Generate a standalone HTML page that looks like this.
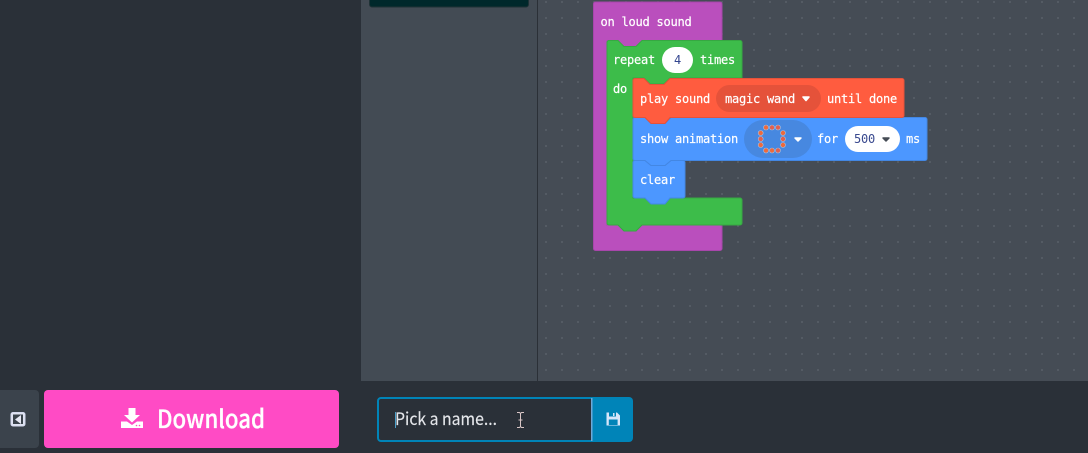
<!DOCTYPE html>
<html><head><meta charset="utf-8"><style>
html,body{margin:0;padding:0;background:#2a3038;width:1088px;height:453px;overflow:hidden}
svg{display:block}
.m{font-family:"DejaVu Sans Mono","Liberation Mono",monospace;font-size:12px;letter-spacing:-.22px;fill:#fff;stroke:#fff;stroke-width:.2}
</style></head><body>
<svg width="1088" height="453" viewBox="0 0 1088 453" xmlns="http://www.w3.org/2000/svg">
<defs><pattern id="g" x="538" y="-6" width="16" height="16" patternUnits="userSpaceOnUse"><path d="M7 8h2M8 7v2" stroke="#636b74" stroke-width=".6"/></pattern></defs>
<rect width="1088" height="453" fill="#2a3038"/>
<rect x="361" y="0" width="176" height="381" fill="#434b54"/>
<rect x="537" y="0" width="1" height="381" fill="#2b3037"/>
<rect x="538" y="0" width="550" height="381" fill="#454c55"/>
<rect x="538" y="0" width="550" height="381" fill="url(#g)"/>
<rect x="369.500" y="-5" width="159" height="12" rx="2.500" fill="#00282b" stroke="#1f3236"/>

<!-- purple C -->
<path d="M595.500 2H720a2 2 0 0 1 2 2V41H607V225H720a2 2 0 0 1 2 2V248.500a2 2 0 0 1-2 2H595.500a2 2 0 0 1-2-2V4a2 2 0 0 1 2-2Z" fill="#ba4fbd" stroke="#a846ab"/>
<path d="M617 39H643L636 47H624Z" fill="#ba4fbd"/>
<text class="m" x="600.500" y="26">on loud sound</text>
<!-- green C -->
<path d="M609 40.500H618l6 6h12l6-6H740a2 2 0 0 1 2 2V78H670l-6 6H650l-6-6H633V198H740a2 2 0 0 1 2 2V223a2 2 0 0 1-2 2H642l-6 6H624l-6-6H609a2 2 0 0 1-2-2V42.500a2 2 0 0 1 2-2Z" fill="#3dbc4a" stroke="#36a842"/>
<rect x="662" y="47" width="31" height="26" rx="13" fill="#fff"/>
<text class="m" x="613" y="64">repeat</text>
<text class="m" x="674" y="64" style="fill:#33458f;stroke:none">4</text>
<text class="m" x="700" y="64">times</text>
<text class="m" x="613" y="93">do</text>
<!-- blue clear -->
<path d="M635 160.500H645l6 5h14l6-5H683a2 2 0 0 1 2 2V196a2 2 0 0 1-2 2H670l-5 6H651l-6-6H635a2 2 0 0 1-2-2V162.500a2 2 0 0 1 2-2Z" fill="#4c97ff" stroke="#4387e3"/>
<text class="m" x="640" y="184">clear</text>
<!-- blue show -->
<path d="M635 117.500H645l6 6h14l6-6H925a2 2 0 0 1 2 2V158.500a2 2 0 0 1-2 2H671l-6 5H651l-6-5H635a2 2 0 0 1-2-2V119.500a2 2 0 0 1 2-2Z" fill="#4c97ff" stroke="#4387e3"/>
<!-- orange -->
<path d="M635 78.500H644l6 6h14l6-6H902a2 2 0 0 1 2 2V115.500a2 2 0 0 1-2 2H670l-5 6H651l-6-6H635a2 2 0 0 1-2-2V80.500a2 2 0 0 1 2-2Z" fill="#ff5c3f" stroke="#e5523a"/>
<rect x="716" y="85" width="105" height="27" rx="13.500" fill="#e5523a"/>
<text class="m" x="640" y="103">play sound</text>
<text class="m" x="725" y="103">magic wand</text>
<path d="M803 97h6l-3 3.500Z" fill="#fff" stroke="#fff" stroke-width="1.600" stroke-linejoin="round"/>
<text class="m" x="827" y="103">until done</text>
<text class="m" x="640" y="143">show animation</text>
<rect x="744" y="120" width="68" height="38" rx="19" fill="#4788e0"/>
<g fill="#ee6a3c" stroke="#a9bfe0" stroke-width=".6">
<circle cx="766" cy="127.500" r="2.500"/><circle cx="772" cy="127.500" r="2.500" fill="#e0604f"/><circle cx="778" cy="127.500" r="2.500" fill="#e0604f"/>
<circle cx="760.700" cy="133" r="2.500"/><circle cx="760.700" cy="139" r="2.500" fill="#e0604f"/><circle cx="760.700" cy="145" r="2.500"/>
<circle cx="783" cy="133" r="2.500"/><circle cx="783" cy="139" r="2.500" fill="#e0604f"/><circle cx="783" cy="145" r="2.500"/>
<circle cx="766" cy="150.500" r="2.500"/><circle cx="772" cy="150.500" r="2.500"/><circle cx="778" cy="150.500" r="2.500" fill="#e0604f"/>
</g>
<path d="M795 138h6l-3 3Z" fill="#fff" stroke="#fff" stroke-width="1.500" stroke-linejoin="round"/>
<text class="m" x="817" y="143">for</text>
<rect x="845" y="126" width="55" height="26" rx="13" fill="#fff"/>
<text class="m" x="854" y="143" style="fill:#3a4a8f;stroke:none">500</text>
<path d="M883 138h6l-3 3Z" fill="#454c55" stroke="#454c55" stroke-width="1.500" stroke-linejoin="round"/>
<text class="m" x="906" y="143">ms</text>

<!-- bottom left -->
<path d="M0 390H35a4 4 0 0 1 4 4V444a4 4 0 0 1-4 4H0Z" fill="#3b434c"/>
<rect x="11" y="412.500" width="14" height="13.500" rx="2" fill="#dfe3f2" stroke="#d5d9ee"/>
<rect x="13" y="414.500" width="10" height="9.500" fill="#3b434c"/>
<path d="M21 415v9l-6-4.500Z" fill="#e6e8f4"/>
<rect x="44" y="390" width="295" height="58" rx="4" fill="#ff4bc5"/>
<path d="M128.500 408h7v7h4.500l-8 7.500-8-7.500h4.500Z" fill="#fff"/>
<path d="M121 421.500h6l5 3.500 5-3.500H143v6.500H121Z" fill="#fff"/>
<circle cx="136.500" cy="425.500" r=".8" fill="#ff4bc5"/><circle cx="139.500" cy="425.500" r=".8" fill="#ff4bc5"/>
<text x="157" y="428" font-family="'Noto Sans CJK JP','Liberation Sans',sans-serif" font-weight="500" font-size="25" fill="#fff" stroke="#fff" stroke-width=".3" textLength="108" lengthAdjust="spacingAndGlyphs">Download</text>

<!-- name input -->
<path d="M592 398H381a3 3 0 0 0-3 3V438a3 3 0 0 0 3 3H592" fill="#2a3038" stroke="#0084b8" stroke-width="2"/>
<path d="M592 397H629a4 4 0 0 1 4 4V438a4 4 0 0 1-4 4H592Z" fill="#0084b8"/>
<rect x="591" y="398" width="1.500" height="43" fill="#6ea9d8"/>
<rect x="395" y="412" width="1" height="16" fill="#4a9fc9"/>
<text x="395" y="425" font-family="'Noto Sans CJK JP','Liberation Sans',sans-serif" font-size="17" fill="#e4e6ea" stroke="#e4e6ea" stroke-width=".15" textLength="102" lengthAdjust="spacingAndGlyphs">Pick a name...</text>
<path d="M517 412.500h2.500l1 1 1-1h2.500M520.500 413.500v13.500M517 427.500h2.500l1-1 1 1h2.500M518.500 420h4" stroke="#d9c6c6" stroke-width="1" fill="none"/>
<path d="M606.500 412.500h10.500l3 3v10h-13.500Z" fill="#d6e6fa"/>
<rect x="609" y="412.500" width="7" height="4" fill="#0084b8"/>
<rect x="613" y="413" width="1.500" height="3" fill="#d6e6fa"/>
<rect x="608.800" y="419.500" width="8.800" height="5.500" fill="#0084b8"/>
</svg>
</body></html>
